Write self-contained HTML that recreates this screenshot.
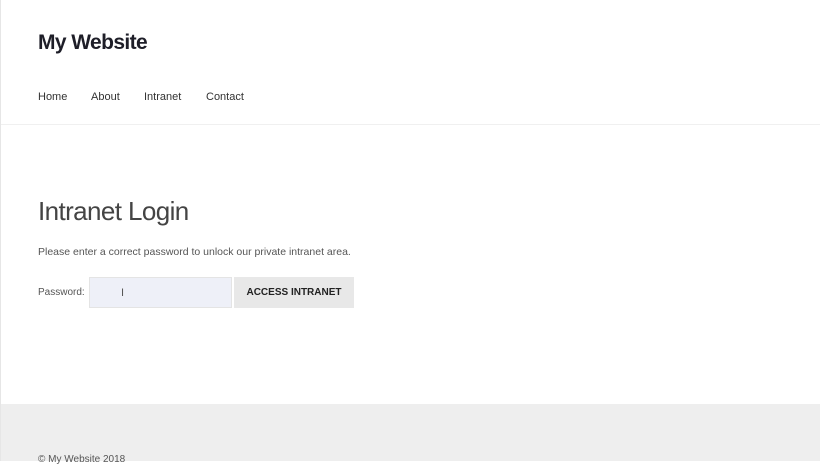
<!DOCTYPE html>
<html><head><meta charset="utf-8"><style>
*{margin:0;padding:0;box-sizing:border-box}
body{width:820px;height:461px;overflow:hidden;background:#fff;font-family:"Liberation Sans",sans-serif;color:#222;position:relative;border-left:1px solid #e6e6e6}
.a{position:absolute;white-space:nowrap}
</style></head><body>
<div class="a" style="left:37px;top:31px;font-size:21px;font-weight:bold;color:#1e1e28;letter-spacing:-0.6px">My Website</div>
<div class="a" style="left:37px;top:91px;font-size:11px;color:#333">Home</div>
<div class="a" style="left:90px;top:91px;font-size:11px;color:#333">About</div>
<div class="a" style="left:143px;top:91px;font-size:11px;color:#333">Intranet</div>
<div class="a" style="left:205px;top:91px;font-size:11px;color:#333">Contact</div>
<div class="a" style="left:0;top:124px;width:820px;height:1px;background:#f0f0f0"></div>
<div class="a" style="left:37px;top:196px;font-size:26px;color:#444;letter-spacing:-0.6px">Intranet Login</div>
<div class="a" style="left:37px;top:246px;font-size:10.5px;color:#555">Please enter a correct password to unlock our private intranet area.</div>
<div class="a" style="left:37px;top:287px;font-size:10px;color:#555">Password:</div>
<div class="a" style="left:88px;top:277px;width:143px;height:31px;background:#eef0f8;border:1px solid #e4e4e4"></div>
<div class="a" style="left:120px;top:287px;font-size:11px;color:#555">I</div>
<div class="a" style="left:233px;top:277px;width:120px;height:31px;background:#e8e8e8;font-size:10px;font-weight:bold;color:#222;text-align:center;line-height:31px">ACCESS INTRANET</div>
<div class="a" style="left:0;top:404px;width:820px;height:57px;background:#eeeeee"></div>
<div class="a" style="left:37px;top:454px;font-size:10px;color:#555">© My Website 2018</div>
</body></html>
